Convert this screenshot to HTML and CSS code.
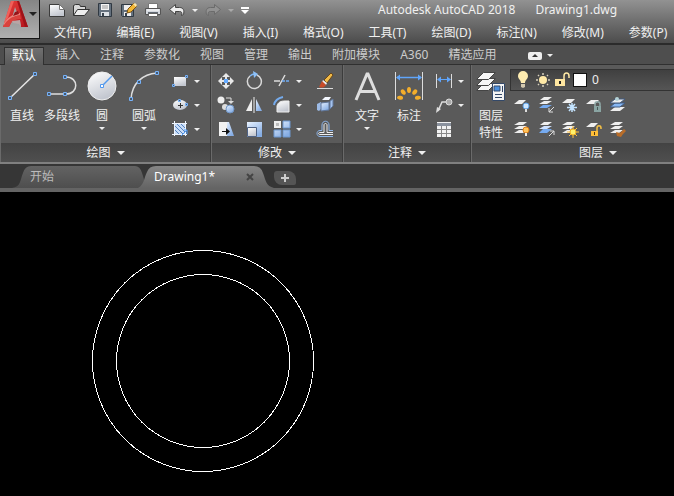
FILE: index.html
```html
<!DOCTYPE html>
<html lang="zh-CN">
<head>
    <meta charset="UTF-8">
    <meta name="viewport" content="width=device-width, initial-scale=1.0">
    <title>Autodesk AutoCAD 2018 - Drawing1.dwg</title>
    <link rel="stylesheet" href="styles.css">
</head>
<body>
    <!-- shared gradients -->
    <svg class="defs" aria-hidden="true">
        <defs>
            <linearGradient id="blue" x1="0" y1="0" x2="0.6" y2="1"><stop offset="0" stop-color="#e8f2ff"/><stop offset="1" stop-color="#86ade4"/></linearGradient>
            <linearGradient id="pale" x1="0" y1="0" x2="0.4" y2="1"><stop offset="0" stop-color="#ffffff"/><stop offset="1" stop-color="#c3c7d0"/></linearGradient>
            <linearGradient id="red" x1="0" y1="0" x2="1" y2="1"><stop offset="0" stop-color="#e8413c"/><stop offset="1" stop-color="#b5121b"/></linearGradient>
            <linearGradient id="tab-on" x1="0" y1="0" x2="0" y2="1"><stop offset="0" stop-color="#858585"/><stop offset="1" stop-color="#646464"/></linearGradient>
            <linearGradient id="tab-off" x1="0" y1="0" x2="0" y2="1"><stop offset="0" stop-color="#636363"/><stop offset="1" stop-color="#4e4e4e"/></linearGradient>
        </defs>
    </svg>

    <header class="titlebar">
        <button class="app-button" aria-label="应用程序菜单">
            <svg width="25" height="28" viewBox="0 0 25 28">
                <path d="M8 1h8l9 26h-7l-1-6H9l-3 6H0z" fill="url(#red)"/>
                <path d="M12 7l3 8-6 3z" fill="#a9a3a3"/>
                <path d="M0 27c3-8 9-11 17-12l1 4c-6 0-10 2-12 8z" fill="#d9423d"/>
                <path d="M1 23c4-6 9-9 16-10v2C9 16 4 20 1 25z" fill="#ee827b"/>
                <path d="M8 1h3L5 18l-4 5z" fill="#f0605a"/>
                <path d="M14 1h2l9 26h-3z" fill="#9e1218"/>
                <path d="M12 12l3-1 1 3-6 2z" fill="#951419"/>
                <path d="M9 21l8-1 1 7-2-3-6-1z" fill="#b9a5a5"/>
            </svg>
            <span class="arrow big dark"></span>
        </button>
        <div class="title-rows">
            <div class="title-row">
                <div class="quick-access">
                    <button class="qa" aria-label="新建"><svg width="18" height="16" viewBox="0 0 18 16"><path d="M1.500 2.500h10l5 5v7h-15z" fill="url(#pale)" stroke="#3c3c3c"/><path d="M11.500 2.500v5h5z" fill="#fff" stroke="#777"/></svg></button>
                    <button class="qa" aria-label="打开"><svg width="18" height="16" viewBox="0 0 18 16"><path d="M1.500 13.500v-10l2-1h4l1 2h5v3" fill="#d7d7d7" stroke="#333"/><path d="M1.500 13.500l4-6h12l-5 6z" fill="#eee" stroke="#333"/></svg></button>
                    <button class="qa" aria-label="保存"><svg width="18" height="16" viewBox="0 0 18 16"><path d="M2.500 1.500h13v13h-12l-1-1z" fill="#65717e" stroke="#303942"/><path d="M5 2h8v6H5z" fill="#f4f4f4"/><path d="M6 4h6M6 6h6" stroke="#999"/><path d="M5 10h8v4H5z" fill="#dce1e6"/><path d="M6 11h2v3H6z" fill="#38424c"/></svg></button>
                    <button class="qa" aria-label="另存为"><svg width="18" height="16" viewBox="0 0 18 16"><path d="M1.500 2.500h12v12h-11l-1-1z" fill="#65717e" stroke="#303942"/><path d="M4 3h8v5H4zM4 10h7v4H4z" fill="#eee"/><path d="M5 11h2v3H5z" fill="#38424c"/><path d="M7 11l1-4 6-6 3 3-6 6z" fill="#f3b735" stroke="#795216"/><path d="M13 2l2-1 2 2-1 2z" fill="#fae6ae"/></svg></button>
                    <button class="qa" aria-label="打印"><svg width="18" height="16" viewBox="0 0 18 16"><path d="M4.500 1.500h9v5h-9z" fill="#fff" stroke="#777"/><path d="M1.500 6.500h15v6h-15z" fill="#d5d9df" stroke="#555"/><path d="M3 8h12" stroke="#fff"/><path d="M4 10h10v2H4z" fill="#626a74"/><path d="M4.500 11.500h9v3h-9z" fill="#fff" stroke="#666"/></svg></button>
                    <button class="qa" aria-label="放弃"><svg width="18" height="16" viewBox="0 0 18 16"><path d="M1.500 7.500l6-5v3h4c4 0 5 3 4 7l-2 1c1-3 0-4-2-4h-4v3z" fill="#eee" stroke="#444"/></svg></button>
                    <button class="qa-drop" aria-label="放弃列表"><span class="arrow"></span></button>
                    <button class="qa" aria-label="重做"><svg width="18" height="16" viewBox="0 0 18 16"><path d="M16.500 7.500l-6-5v3h-4c-4 0-5 3-4 7l2 1c-1-3 0-4 2-4h4v3z" fill="#929292" stroke="#6b6b6b"/></svg></button>
                    <button class="qa-drop" aria-label="重做列表"><span class="arrow dim"></span></button>
                    <button class="qa-more" aria-label="自定义快速访问工具栏"><svg width="8" height="7" viewBox="0 0 8 7"><path d="M0 0h8v2H0zM0 3h8L4 7z" fill="#fff"/></svg></button>
                </div>
                <div class="title"><span>Autodesk AutoCAD 2018</span><span>Drawing1.dwg</span></div>
            </div>
            <nav class="menu">
                <a href="#">文件(F)</a>
                <a href="#">编辑(E)</a>
                <a href="#">视图(V)</a>
                <a href="#">插入(I)</a>
                <a href="#">格式(O)</a>
                <a href="#">工具(T)</a>
                <a href="#">绘图(D)</a>
                <a href="#">标注(N)</a>
                <a href="#">修改(M)</a>
                <a href="#">参数(P)</a>
            </nav>
        </div>
    </header>

    <nav class="ribbon-tabs">
        <a href="#" class="active">默认</a>
        <a href="#">插入</a>
        <a href="#">注释</a>
        <a href="#">参数化</a>
        <a href="#">视图</a>
        <a href="#">管理</a>
        <a href="#">输出</a>
        <a href="#">附加模块</a>
        <a href="#">A360</a>
        <a href="#">精选应用</a>
        <button class="minimize" aria-label="最小化功能区"><svg width="14" height="8" viewBox="0 0 14 8"><rect width="14" height="8" rx="2" fill="#eee"/><path d="M4 5h6L7 2z" fill="#333"/></svg><span class="arrow"></span></button>
    </nav>

    <div class="ribbon">
        <section class="panel">
            <div class="panel-body draw">
                <button class="large"><svg width="32" height="32" viewBox="0 0 32 32"><path d="M4 28L29 4" stroke="#e6e6e6" stroke-width="1.500"/><g fill="#47596e" stroke="#76b2fa"><path d="M2.500 26.500h3v3h-3zM27.500 2.500h3v3h-3z"/></g></svg><span>直线</span></button>
                <button class="large"><svg width="32" height="32" viewBox="0 0 32 32"><path d="M3 24h17c13 0 13-17 0-17" fill="none" stroke="#dedede" stroke-width="1.500"/><g fill="#47596e" stroke="#76b2fa"><path d="M1.500 22.500h3v3h-3zM17.500 22.500h3v3h-3zM17.500 5.500h3v3h-3z"/></g></svg><span>多段线</span></button>
                <button class="large"><svg width="32" height="32" viewBox="0 0 32 32"><circle cx="16" cy="16" r="14" fill="url(#pale)" stroke="#eee"/><path d="M16 16L26 6" stroke="#5299ee" stroke-width="1.500"/><path d="M14.500 14.500h3v3h-3z" fill="#fff" stroke="#5299ee"/></svg><span>圆</span><span class="arrow"></span></button>
                <button class="large"><svg width="32" height="32" viewBox="0 0 32 32"><path d="M3 29C4 13 15 4 29 3" fill="none" stroke="#dedede" stroke-width="1.500"/><g fill="#47596e" stroke="#76b2fa"><path d="M1.500 27.500h3v3h-3zM9.500 10.500h3v3h-3zM27.500 1.500h3v3h-3z"/></g></svg><span>圆弧</span><span class="arrow"></span></button>
                <div class="small-column">
                    <button class="small" aria-label="矩形"><svg width="20" height="20" viewBox="0 0 20 20"><path d="M4 6h12v9H4z" fill="url(#pale)"/><g fill="#47596e" stroke="#76b2fa"><path d="M2.500 13.500h2v2h-2zM15.500 4.500h2v2h-2z"/></g></svg><span class="arrow"></span></button>
                    <button class="small" aria-label="椭圆"><svg width="20" height="20" viewBox="0 0 20 20"><ellipse cx="10" cy="10" rx="7" ry="5" fill="url(#pale)"/><path d="M8 10.500h5M10.500 8v5" stroke="#333"/><path d="M8.500 4.500h2v2h-2zM15.500 8.500h2v2h-2z" fill="#47596e" stroke="#76b2fa"/></svg><span class="arrow"></span></button>
                    <button class="small" aria-label="图案填充"><svg width="20" height="20" viewBox="0 0 20 20"><path d="M5 5h10v10H5z" fill="#c9ddf8"/><path d="M5 7l8 8M5 11l4 4M7 5l8 8M11 5l4 4" stroke="#5282c0"/><path d="M2 4.500h15M2 15.500h15M4.500 2v15M15.500 2v15" stroke="#eef5ff"/><path d="M11 17l6-6M14 11h3v4" stroke="#4f9cf8" fill="none"/></svg><span class="arrow"></span></button>
                </div>
            </div>
            <button class="panel-title">绘图<span class="arrow big"></span></button>
        </section>

        <section class="panel">
            <div class="panel-body modify">
                <button class="small" aria-label="移动"><svg width="20" height="20" viewBox="0 0 20 20"><path d="M10 2l4 4h-3v2H9V6H6zM10 18l-4-4h3v-2h2v2h3zM2 10l4-4v3h2v2H6v3zM18 10l-4 4v-3h-2V9h2V6z" fill="#e8e8e8"/><path d="M8 8h4v4H8z" fill="#64aaff"/></svg></button>
                <button class="small" aria-label="旋转"><svg width="20" height="20" viewBox="0 0 20 20"><path d="M6 5a7 7 0 1 0 7-1" fill="none" stroke="#d9d9d9" stroke-width="1.500"/><path d="M6 5a7 7 0 0 1 5-2" fill="none" stroke="#7eb7f4" stroke-width="1.500"/><path d="M9 0l5 3-4 4z" fill="#8cc0f8"/></svg></button>
                <button class="small" aria-label="修剪"><svg width="20" height="20" viewBox="0 0 20 20"><path d="M2 10h6M7 15l6-11" stroke="#ddd" stroke-width="1.500"/><path d="M10 10h8" stroke="#71adf5" stroke-width="1.500" stroke-dasharray="3 1"/></svg><span class="arrow"></span></button>
                <button class="small" aria-label="删除"><svg width="20" height="20" viewBox="0 0 20 20"><path d="M2 17.500h16" stroke="#ddd"/><path d="M9 9l7-7 2 2-6 8z" fill="#f0ba48" stroke="#6a4718"/><path d="M8 9l4 3-1 2-4-3z" fill="#eee"/><path d="M7 10l4 4c-2 3-4 3-7 2z" fill="#c94c29"/></svg></button>
                <button class="small" aria-label="复制"><svg width="20" height="20" viewBox="0 0 20 20"><circle cx="5" cy="5" r="3.500" fill="#eee"/><circle cx="9" cy="12" r="3" fill="#ddd"/><circle cx="14" cy="14" r="4" fill="url(#blue)" stroke="#7196c5"/><path d="M10 3h5v4" fill="none" stroke="#ddd"/><path d="M12 6h6l-3 3z" fill="#ddd"/></svg></button>
                <button class="small" aria-label="镜像"><svg width="20" height="20" viewBox="0 0 20 20"><path d="M8 4v12H2z" fill="#eee"/><path d="M12 4v12h6z" fill="url(#blue)"/><path d="M10 2v16" stroke="#eee"/></svg></button>
                <button class="small" aria-label="圆角"><svg width="20" height="20" viewBox="0 0 20 20"><path d="M5 17v-6c1-4 4-5 8-5h4v11z" fill="url(#pale)" stroke="#eee"/><path d="M2 10c1-5 4-7 9-8" fill="none" stroke="#75abed" stroke-width="2"/></svg><span class="arrow"></span></button>
                <button class="small" aria-label="分解"><svg width="20" height="20" viewBox="0 0 20 20"><path d="M2 9l4-2v7l-2 2-2-1z" fill="#9dbbe6"/><path d="M7 5l3-3h6l-2 3z" fill="#f4f8ff"/><path d="M6 8l8-1v8l-8 1z" fill="url(#blue)" stroke="#60779b"/><path d="M15 6l3-2v7l-3 3z" fill="#a5c3ee" stroke="#60779b"/></svg></button>
                <button class="small" aria-label="拉伸"><svg width="20" height="20" viewBox="0 0 20 20"><path d="M10 3h3l5 14h-8z" fill="url(#blue)"/><path d="M3 3h8v14H3z" fill="#f2f2f2"/><path d="M6 12.500h7" stroke="#111"/><path d="M10 9l4 3.500-4 3.500z" fill="#111"/></svg></button>
                <button class="small" aria-label="缩放"><svg width="20" height="20" viewBox="0 0 20 20"><path d="M3 3h15v15H3z" fill="url(#blue)"/><path d="M3.500 8.500h9v9h-9z" fill="url(#pale)" stroke="#4f6284"/></svg></button>
                <button class="small" aria-label="阵列"><svg width="20" height="20" viewBox="0 0 20 20"><path d="M2 2h7v7H2z" fill="#eee"/><path d="M4 4h3v3H4z" fill="#bbb"/><path d="M11 2h7v7h-7zM2 11h7v7H2zM11 11h7v7h-7z" fill="url(#blue)" stroke="#6d97cf"/></svg><span class="arrow"></span></button>
                <button class="small" aria-label="偏移"><svg width="20" height="20" viewBox="0 0 20 20"><path d="M18 17.500H5c-4 0-4-6 0-6h2V6c0-5 7-5 7 0v5.500h4" fill="none" stroke="#8eb7ed"/><path d="M18 15.500H5c-2 0-2-2 0-2h4V6c0-2 3-2 3 0v7.500h6" fill="none" stroke="#eee"/></svg></button>
            </div>
            <button class="panel-title">修改<span class="arrow big"></span></button>
        </section>

        <section class="panel">
            <div class="panel-body annotate">
                <button class="large"><svg width="32" height="32" viewBox="0 0 32 32"><path d="M5 30L16 4h1l11 26M9 21.500h15" fill="none" stroke="#dedede" stroke-width="3"/></svg><span>文字</span><span class="arrow"></span></button>
                <button class="large">
                    <svg width="32" height="32" viewBox="0 0 32 32">
                        <path d="M2.500 2v28M29.500 2v28" stroke="#ddd"/><path d="M4 7.500h24" stroke="#60a5fa" stroke-width="1.500"/><path d="M3 7.500l4-3v6zM29 7.500l-4-3v6z" fill="#60a5fa"/>
                        <g fill="#f4ae2b">
                            <ellipse cx="16" cy="20" rx="2" ry="3"/>
                            <ellipse cx="16" cy="20" rx="2" ry="3" transform="rotate(-40 16 29)"/>
                            <ellipse cx="16" cy="20" rx="2" ry="3" transform="rotate(40 16 29)"/>
                            <ellipse cx="16" cy="20" rx="2" ry="3" transform="rotate(-82 16 29)"/>
                            <ellipse cx="16" cy="20" rx="2" ry="3" transform="rotate(82 16 29)"/>
                        </g>
                    </svg>
                    <span>标注</span>
                </button>
                <div class="small-column">
                    <button class="small" aria-label="线性标注"><svg width="20" height="20" viewBox="0 0 20 20"><path d="M2.500 3v14M17.500 3v14" stroke="#ddd"/><path d="M4 8.500h12" stroke="#60a5fa"/><path d="M3 8.500l4-3v6zM17 8.500l-4-3v6z" fill="#60a5fa"/></svg><span class="arrow"></span></button>
                    <button class="small" aria-label="引线"><svg width="20" height="20" viewBox="0 0 20 20"><path d="M4 16l4-9h5" fill="none" stroke="#ddd" stroke-width="1.500"/><path d="M2 18l1-6 4 2z" fill="#ddd"/><circle cx="15" cy="7" r="3" fill="#aaa" stroke="#ddd"/></svg><span class="arrow"></span></button>
                    <button class="small" aria-label="表格"><svg width="20" height="20" viewBox="0 0 20 20"><path d="M3 3h14v15H3z" fill="#f2f2f2"/><path d="M3 4h14v3H3z" fill="#8b929e"/><path d="M3 10.500h14M3 14.500h14M7.500 7v11M12.500 7v11" stroke="#888"/></svg></button>
                </div>
            </div>
            <button class="panel-title">注释<span class="arrow big"></span></button>
        </section>

        <section class="panel">
            <div class="panel-body layers">
                <button class="large"><svg width="32" height="32" viewBox="0 0 32 32"><g fill="#f6f6f6" stroke="#444"><path d="M1.500 20.500l7-7h12l-7 7z"/><path d="M1.500 15.500l7-7h12l-7 7z"/><path d="M1.500 9.500l7-7h12l-7 7z"/></g><path d="M17.500 13.500h12v17h-12z" fill="#f4f4f4" stroke="#334868"/><path d="M19 16h6v5h-6z" fill="#4b8fde" stroke="#334868"/><path d="M27.500 16v6M20 24.500h7M20 27.500h7" stroke="#334868"/></svg><span>图层<br>特性</span></button>
                <div class="layer-tools">
                    <label class="layer-select">
                        <svg width="20" height="20" viewBox="0 0 20 20"><path d="M8 13c0-3-3-4-3-7a5 5 0 0 1 10 0c0 3-3 4-3 7z" fill="#ffedb1"/><path d="M8 14h4v3l-2 1-2-1z" fill="#d3c8af"/></svg>
                        <svg width="20" height="20" viewBox="0 0 20 20"><circle cx="10" cy="10" r="4" fill="#ffe9a6"/><path d="M10 3v2M10 15v2M3 10h2M15 10h2M5 5l1 1M14 14l1 1M5 15l1-1M14 6l1-1" stroke="#d8d1bd" stroke-width="1.500"/></svg>
                        <svg width="20" height="20" viewBox="0 0 20 20"><path d="M11 9V6c0-4 5-4 5 0v2" fill="none" stroke="#ffe9a6" stroke-width="1.500"/><path d="M2 9h10v7H2z" fill="#ffe6a0"/><path d="M7 11v3" stroke="#222" stroke-width="2"/></svg>
                        <span class="swatch"></span>
                        <select aria-label="图层"><option>0</option></select>
                    </label>
                    <div class="layer-grid">
                        <button class="small" aria-label="关"><svg width="20" height="20" viewBox="0 0 20 20"><path d="M2 9l5-4h7l-4 4z" fill="#eee"/><circle cx="14" cy="11" r="3" fill="#cee7ff" stroke="#5ea1e7"/><path d="M14 14v3" stroke="#ddd" stroke-width="2"/></svg></button>
                        <button class="small" aria-label="隔离"><svg width="20" height="20" viewBox="0 0 20 20"><path d="M3 13l4-3h9l-5 3z" fill="#75aaf0"/><path d="M3 9l5-3h8l-5 3zM4 5l4-3h8l-4 3z" fill="#eee"/><path d="M18 12l-5 5M13 13v4h4" fill="none" stroke="#ddd"/></svg></button>
                        <button class="small" aria-label="冻结"><svg width="20" height="20" viewBox="0 0 20 20"><path d="M2 8l5-4h8l-4 4z" fill="#eee"/><path d="M12 8v9M7 12.500h10M9 9l6 7M9 16l6-7" stroke="#c4e4ff" stroke-width="1.500"/></svg></button>
                        <button class="small" aria-label="锁定"><svg width="20" height="20" viewBox="0 0 20 20"><path d="M2 9l5-4h8l-4 4z" fill="#eee"/><path d="M11 11V9c0-3 5-3 5 0v2" fill="none" stroke="#91aaa9" stroke-width="1.500"/><path d="M10 11h7v6h-7z" fill="#8aa5a3"/><path d="M13.500 12v3" stroke="#475c5a"/></svg></button>
                        <button class="small" aria-label="置为当前"><svg width="20" height="20" viewBox="0 0 20 20"><path d="M2 16l5-4h10l-5 4z" fill="#eee"/><path d="M2 12l5-4h10l-5 4z" fill="#87b7f3" stroke="#415a80"/><path d="M2 8l5-4h10l-5 4z" fill="#eee" stroke="#415a80"/><circle cx="9" cy="4" r="2" fill="#b4d2d6"/></svg></button>
                        <button class="small" aria-label="全部打开"><svg width="20" height="20" viewBox="0 0 20 20"><path d="M2 14l5-3h8l-4 3zM2 10l5-3h8l-4 3zM2 6l5-3h8l-4 3z" fill="#eee"/><circle cx="14" cy="11" r="3" fill="#ffc45c" stroke="#de7e17"/><path d="M14 14v3" stroke="#eee" stroke-width="2"/></svg></button>
                        <button class="small" aria-label="取消隔离"><svg width="20" height="20" viewBox="0 0 20 20"><path d="M3 14l4-4h9l-5 4z" fill="#75aaf0"/><path d="M3 10l5-3h8l-5 3z" fill="#cfe2ff"/><path d="M4 6l4-3h8l-4 3z" fill="#eee"/><path d="M13 17l5-5M14 12h4v4" fill="none" stroke="#ddd"/></svg></button>
                        <button class="small" aria-label="全部解冻"><svg width="20" height="20" viewBox="0 0 20 20"><path d="M2 14l5-3h8l-4 3zM2 10l5-3h8l-4 3zM2 6l5-3h8l-4 3z" fill="#eee"/><path d="M13 7v12M7 13h12M9 9l8 8M9 17l8-8" stroke="#ffc341"/><circle cx="13" cy="13" r="3" fill="#fff16c" stroke="#edab20"/></svg></button>
                        <button class="small" aria-label="解锁"><svg width="20" height="20" viewBox="0 0 20 20"><path d="M2 8l5-4h7l-4 4z" fill="#eee"/><path d="M13 12V9c0-3 4-3 4 0v1" fill="none" stroke="#f5c145" stroke-width="1.500"/><path d="M7 12h7v5H7z" fill="#ffbf38"/><path d="M10.500 13v3" stroke="#503715"/></svg></button>
                        <button class="small" aria-label="匹配图层"><svg width="20" height="20" viewBox="0 0 20 20"><path d="M2 14l5-3h8l-4 3zM2 10l5-3h8l-4 3zM2 6l5-3h8l-4 3z" fill="#eee"/><path d="M8 13l4 1 4-4 2 2-3 3-2 3-4-1z" fill="#b96d29"/></svg></button>
                    </div>
                </div>
            </div>
            <button class="panel-title">图层<span class="arrow big"></span></button>
        </section>
    </div>

    <div class="file-tabs">
        <a href="#" class="file-tab">
            <svg class="shape" viewBox="0 0 136 22" preserveAspectRatio="none"><path d="M0 22C9 21 8 14 11 7Q13 0 19 0H123Q128 0 130 7C133 15 133 22 136 22z" fill="url(#tab-off)"/></svg>
            <span>开始</span>
        </a>
        <div class="file-tab current">
            <svg class="shape" viewBox="0 0 136 22" preserveAspectRatio="none"><path d="M0 22C6 19 6 12 9 6Q11 0 18 0H116Q123 0 125 7C128 15 128 20 136 22z" fill="url(#tab-on)"/></svg>
            <a href="#">Drawing1*</a>
            <button class="close" aria-label="关闭"><svg width="8" height="8" viewBox="0 0 8 8"><path d="M1 1l6 6M7 1L1 7" stroke="#444" stroke-width="2"/></svg></button>
        </div>
        <button class="new-tab" aria-label="新图形"><svg width="10" height="10" viewBox="0 0 10 10"><path d="M5 1v8M1 5h8" stroke="#ccc" stroke-width="2"/></svg></button>
    </div>

    <main class="canvas">
        <svg width="100%" height="100%">
            <circle cx="203" cy="169" r="110.500"/>
            <circle cx="203" cy="169" r="86.500"/>
        </svg>
    </main>
</body>
</html>
```
FILE: styles.css
```css
* {
    box-sizing: border-box;
}
body {
    margin: 0;
    height: 100vh;
    display: flex;
    flex-direction: column;
    overflow: hidden;
    background: #000;
    color: #f0f0f0;
    font: 12px/16px "Noto Sans", "Noto Sans CJK SC", sans-serif;
}
a {
    color: inherit;
    text-decoration: none;
    white-space: nowrap;
}
button {
    display: flex;
    align-items: center;
    justify-content: center;
    padding: 0;
    border: none;
    background: none;
    color: inherit;
    font: inherit;
}
svg {
    display: block;
    flex: none;
}
.defs {
    position: absolute;
    width: 0;
    height: 0;
}
.arrow {
    border: 3px solid transparent;
    border-top-color: #eee;
    border-bottom: none;
}
.arrow.big {
    border-width: 4px;
    border-bottom: none;
}
.arrow.dim {
    border-top-color: #aaa;
}
.arrow.dark {
    border-top-color: #222;
}

/* title bar and menu */
.titlebar {
    display: flex;
    align-items: flex-start;
    background: linear-gradient(#929292, #6e6e6e 50%, #4c4c4c);
    border-bottom: 2px solid #2b2b2b;
}
.app-button {
    width: 40px;
    height: 39px;
    gap: 1px;
    padding-bottom: 10px;
    background: linear-gradient(#858585, #b0b0b0);
    border: solid #161616;
    border-width: 0 1px 1px 0;
}
.title-rows {
    flex: 1;
    min-width: 0;
}
.title-row {
    display: flex;
    align-items: center;
    height: 20px;
    padding-left: 5px;
}
.quick-access {
    display: flex;
    align-items: center;
}
.qa {
    width: 24px;
}
.qa-drop {
    width: 12px;
}
.qa-more {
    width: 16px;
}
.title {
    display: flex;
    gap: 20px;
    margin-left: 125px;
    white-space: nowrap;
}
.menu {
    display: flex;
    gap: 25px;
    padding: 5px 0 2px 14px;
}

/* ribbon */
.ribbon-tabs {
    display: flex;
    gap: 4px;
    height: 20px;
    padding: 2px 0 0 4px;
    background: #4e4e4e;
    border-bottom: 1px solid #303030;
    color: #ccc;
}
.ribbon-tabs a {
    height: 18px;
    padding: 0 8px;
}
.ribbon-tabs .active {
    color: #fff;
    background: linear-gradient(#707070, #5a5a5a);
    border: 1px solid #303030;
    border-bottom: none;
    padding: 0 7px;
    line-height: 15px;
}
.minimize {
    gap: 5px;
    margin-left: 20px;
}
.ribbon {
    display: flex;
    background: #5a5a5a;
    border-bottom: 2px solid #808080;
}
.panel {
    display: flex;
    flex-direction: column;
    border-right: 1px solid #3c3c3c;
    border-left: 1px solid #6a6a6a;
}
.panel:last-child {
    flex: 1;
    border-right: none;
}
.panel-body {
    display: grid;
    height: 78px;
    padding-top: 4px;
}
.draw {
    grid-template-columns: 40px 40px 40px 44px 44px;
    padding-left: 1px;
}
.modify {
    grid-template-columns: 28px 28px 43px 31px;
    grid-template-rows: repeat(3, 24px);
}
.annotate {
    grid-template-columns: 42px 42px 40px;
    padding-left: 2px;
}
.layers {
    grid-template-columns: 38px 1fr;
}
.large {
    flex-direction: column;
    justify-content: flex-start;
    padding-top: 1px;
    line-height: 17px;
}
.large svg {
    margin-bottom: 5px;
}
.large .arrow {
    margin-top: 3px;
}
.small-column {
    display: grid;
    grid-template-rows: repeat(3, 24px);
    justify-items: start;
}
.small {
    gap: 4px;
    justify-content: flex-start;
    padding-left: 4px;
}
.panel-title {
    height: 19px;
    gap: 6px;
    background: linear-gradient(#434343, #4f4f4f);
}
.panel:last-child .panel-title {
    padding-left: 50px;
}

/* layers */
.layer-select {
    display: flex;
    align-items: center;
    height: 22px;
    padding-left: 2px;
    background: linear-gradient(#404040, #555);
    border: 1px solid #333;
    border-right: none;
    margin-bottom: 2px;
}
.swatch {
    width: 14px;
    height: 14px;
    margin: 0 5px 0 0;
    background: #fff;
    border: 1px solid #111;
}
.layer-select select {
    flex: 1;
    appearance: none;
    border: none;
    padding: 0;
    background: none;
    color: #eee;
    font: inherit;
}
.layer-grid {
    display: grid;
    grid-template-columns: repeat(5, 24px);
    grid-template-rows: repeat(2, 24px);
}
.layer-grid .small {
    padding-left: 2px;
}

/* drawing tabs */
.file-tabs {
    display: flex;
    align-items: flex-end;
    height: 28px;
    padding-left: 12px;
    background: #363636;
    border-bottom: 4px solid #646464;
}
.file-tab {
    position: relative;
    display: flex;
    align-items: center;
    justify-content: space-between;
    width: 136px;
    height: 22px;
    padding: 0 18px;
    color: #bbb;
}
.file-tab.current {
    margin-left: -10px;
    padding: 0 20px 0 16px;
    color: #fff;
}
.file-tab .shape {
    position: absolute;
    inset: 0;
    width: 100%;
    height: 100%;
}
.file-tab > :not(.shape) {
    position: relative;
}
.new-tab {
    width: 22px;
    height: 14px;
    margin: 0 0 3px 0;
    background: #555;
    border-radius: 3px 8px 2px 8px;
}

/* model space */
.canvas {
    flex: 1;
    min-height: 0;
}
.canvas circle {
    fill: none;
    stroke: #fff;
    stroke-width: 1;
    shape-rendering: crispEdges;
}
```
